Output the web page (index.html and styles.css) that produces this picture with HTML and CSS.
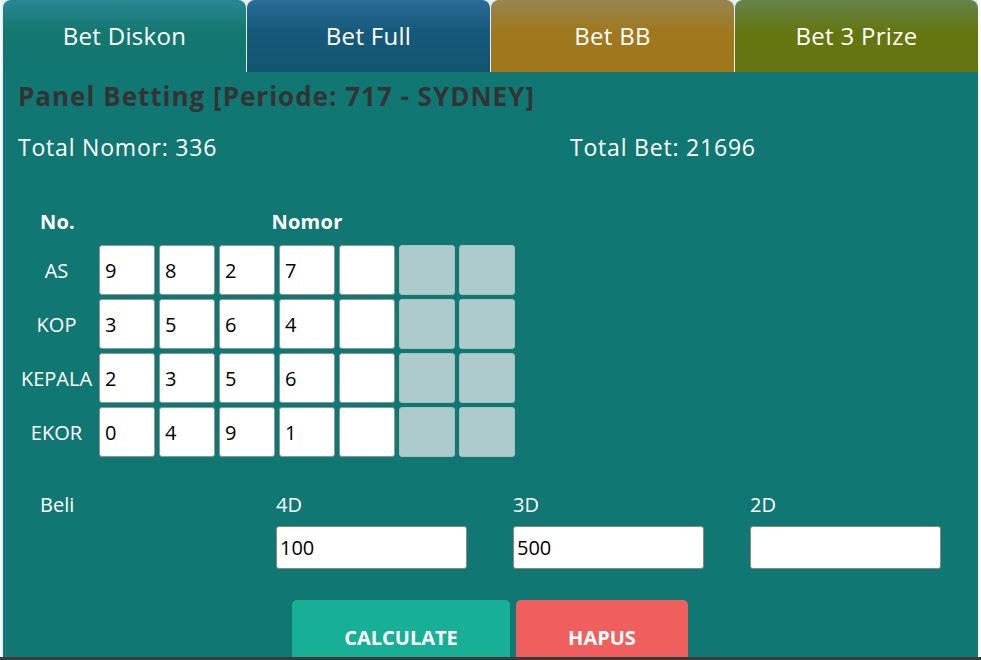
FILE: index.html
```html
<!DOCTYPE html>
<html>
<head>
<meta charset="utf-8">
<link rel="stylesheet" href="styles.css">
</head>
<body>
<div class="window">
  <div class="frame">
    <div class="tabs">
      <div class="tab tab-diskon">Bet Diskon</div>
      <div class="tab tab-full">Bet Full</div>
      <div class="tab tab-bb">Bet BB</div>
      <div class="tab tab-prize">Bet 3 Prize</div>
    </div>
    <div class="panel">
      <h1 class="title">Panel Betting [Periode: 717 - SYDNEY]</h1>
      <div class="totals">
        <div class="total total-nomor">Total Nomor: 336</div>
        <div class="total">Total Bet: 21696</div>
      </div>
      <div class="grid">
        <div class="head head-no">No.</div>
        <div class="head head-nomor">Nomor</div>

        <div class="label">AS</div>
        <div class="cell">9</div><div class="cell">8</div><div class="cell">2</div><div class="cell">7</div><div class="cell"></div><div class="cell off"></div><div class="cell off"></div>

        <div class="label">KOP</div>
        <div class="cell">3</div><div class="cell">5</div><div class="cell">6</div><div class="cell">4</div><div class="cell"></div><div class="cell off"></div><div class="cell off"></div>

        <div class="label">KEPALA</div>
        <div class="cell">2</div><div class="cell">3</div><div class="cell">5</div><div class="cell">6</div><div class="cell"></div><div class="cell off"></div><div class="cell off"></div>

        <div class="label">EKOR</div>
        <div class="cell">0</div><div class="cell">4</div><div class="cell">9</div><div class="cell">1</div><div class="cell"></div><div class="cell off"></div><div class="cell off"></div>
      </div>
      <div class="beli">
        <div class="beli-label">Beli</div>
        <div class="field">
          <div class="field-label">4D</div>
          <div class="input">100</div>
        </div>
        <div class="field">
          <div class="field-label">3D</div>
          <div class="input">500</div>
        </div>
        <div class="field">
          <div class="field-label">2D</div>
          <div class="input"></div>
        </div>
      </div>
      <div class="actions">
        <div class="btn btn-calc">CALCULATE</div>
        <div class="btn btn-hapus">HAPUS</div>
      </div>
    </div>
  </div>
</div>
</body>
</html>
```

FILE: styles.css
```css
html, body {
  margin: 0;
  padding: 0;
  background: #ffffff;
}
body {
  font-family: "Open Sans", "Noto Sans", sans-serif;
}
.window {
  height: 657px;
  overflow: hidden;
  border-bottom: 3px solid #3b3b3b;
  background: linear-gradient(to right, #ffffff 0px, #dbe8f8 3px, #ffffff 3px);
}
.frame {
  margin-left: 3px;
  width: 975px;
}
.tabs {
  display: flex;
  gap: 1px;
  height: 72px;
  background: #e4edf9;
}
.tab {
  flex: 1;
  display: flex;
  align-items: center;
  justify-content: center;
  color: #ffffff;
  font-size: 24px;
  letter-spacing: 0.3px;
  border-radius: 8px 8px 0 0;
  padding-bottom: 2px;
  box-sizing: border-box;
}
.tab-diskon { background: linear-gradient(to bottom, #2a8695 0%, #13786f 45%, #107771 100%); }
.tab-full { background: linear-gradient(to bottom, #2b6b98 0%, #16597a 45%, #125570 100%); }
.tab-bb { background: linear-gradient(to bottom, #968650 0%, #a0781d 45%, #a0761b 100%); }
.tab-prize { background: linear-gradient(to bottom, #66844c 0%, #65760f 45%, #657512 100%); }
.panel {
  background: #117773;
  height: 600px;
  padding: 7px 15px 0 15px;
}
.title {
  margin: 0;
  font-size: 26px;
  letter-spacing: 1px;
  font-weight: 700;
  color: #333333;
  line-height: 34px;
}
.totals {
  display: flex;
  margin-top: 19px;
  color: #ffffff;
  font-size: 23px;
  letter-spacing: 0.8px;
  line-height: 30px;
}
.total-nomor {
  width: 552px;
}
.grid {
  display: grid;
  grid-template-columns: 77px repeat(7, 56px);
  grid-template-rows: 32px;
  grid-auto-rows: 50px;
  column-gap: 4px;
  row-gap: 4px;
  margin-top: 47px;
}
.grid .head {
  color: #ffffff;
  font-weight: 700;
  font-size: 20px;
  line-height: 26px;
  letter-spacing: 0.3px;
}
.head-no {
  text-align: center;
  padding-left: 2px;
}
.head-nomor {
  grid-column: 2 / 9;
  text-align: center;
}
.label {
  color: #ffffff;
  font-size: 20px;
  display: flex;
  align-items: center;
  justify-content: center;
  white-space: nowrap;
}
.cell {
  background: #ffffff;
  border: 1px solid #8a9a9a;
  border-radius: 3px;
  box-sizing: border-box;
  color: #000000;
  font-size: 20px;
  display: flex;
  align-items: center;
  padding-left: 5px;
}
.cell.off {
  background: #adcbcb;
  border-color: #a2c2c2;
}
.beli {
  display: flex;
  margin-top: 35px;
  color: #ffffff;
  font-size: 20px;
}
.beli-label {
  flex: 0 0 258px;
  padding-left: 22px;
  box-sizing: border-box;
  line-height: 26px;
}
.field {
  flex: 0 0 191px;
  margin-right: 46px;
}
.field:last-child {
  margin-right: 0;
}
.field-label {
  line-height: 26px;
}
.input {
  margin-top: 8px;
  height: 43px;
  background: #ffffff;
  border: 1px solid #888888;
  border-radius: 3px;
  box-sizing: border-box;
  color: #000000;
  font-size: 20px;
  display: flex;
  align-items: center;
  padding-left: 3px;
}
.actions {
  display: flex;
  gap: 6px;
  margin-top: 31px;
  margin-left: 274px;
}
.btn {
  height: 80px;
  border-radius: 5px 5px 0 0;
  color: #ffffff;
  font-weight: 700;
  font-size: 20px;
  display: flex;
  justify-content: center;
  padding-top: 24px;
  box-sizing: border-box;
}
.btn-calc {
  width: 218px;
  background: #17b097;
}
.btn-hapus {
  width: 172px;
  background: #f05f5e;
}
```
